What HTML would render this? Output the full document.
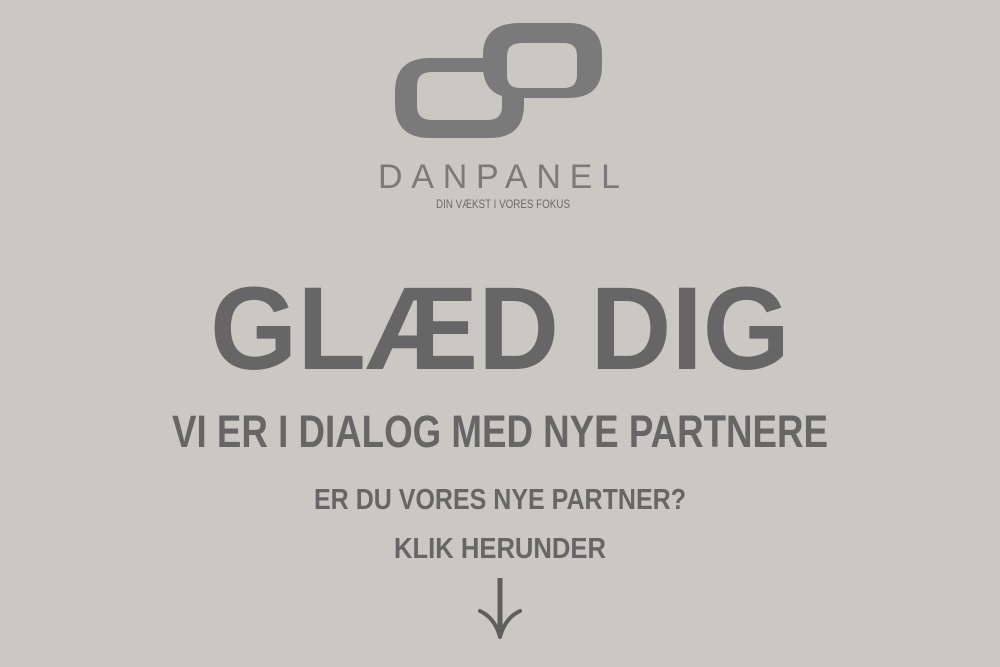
<!DOCTYPE html>
<html><head><meta charset="utf-8"><style>
html,body{margin:0;padding:0;width:1000px;height:667px;overflow:hidden;background:#cbc8c4;}
svg{display:block}
</style></head><body>
<svg width="1000" height="667" viewBox="0 0 1000 667" xmlns="http://www.w3.org/2000/svg">
<rect width="1000" height="667" fill="#cbc8c4"/>
<path fill="#7a7a7a" d="M430 58 H490 Q524 58 524 92 V104 Q524 138 490 138 H430 Q395 138 395 104 V92 Q395 58 430 58 Z"/>
<path fill="#cbc8c4" d="M432 72 H488 Q502 72 502 86 V106 Q502 120 488 120 H432 Q417 120 417 106 V86 Q417 72 432 72 Z"/>
<path fill="#7a7a7a" d="M520 23 H568 Q602 23 602 55 V66 Q602 98 568 98 H517 Q483 98 483 66 V55 Q483 23 520 23 Z"/>
<path fill="#cbc8c4" d="M522 43 H564 Q577 43 577 56 V75 Q577 88 564 88 H520 Q507 88 507 75 V56 Q507 43 522 43 Z"/>
<g font-family="Liberation Sans, sans-serif" text-anchor="middle">
<text x="499" y="188" font-size="34" fill="#7a7a7a" textLength="242" lengthAdjust="spacing">DANPANEL</text>
<text x="503" y="208" font-size="11.5" fill="#6a6a6a" textLength="134" lengthAdjust="spacingAndGlyphs">DIN VÆKST I VORES FOKUS</text>
<g font-weight="bold" fill="#666">
<text x="500" y="369" font-size="118" textLength="580" lengthAdjust="spacingAndGlyphs">GLÆD DIG</text>
<text x="500" y="447" font-size="45" textLength="656" lengthAdjust="spacingAndGlyphs">VI ER I DIALOG MED NYE PARTNERE</text>
<text x="500" y="509" font-size="29" textLength="372" lengthAdjust="spacingAndGlyphs">ER DU VORES NYE PARTNER?</text>
<text x="500" y="558" font-size="29" textLength="212" lengthAdjust="spacingAndGlyphs">KLIK HERUNDER</text>
</g>
</g>
<g stroke="#5e5e5e" fill="none">
<line x1="500" y1="578" x2="500" y2="632" stroke-width="5"/>
<path d="M480 611 Q495 618 500 637 Q505 618 520 611" stroke-width="4" stroke-linecap="round" stroke-linejoin="round"/>
</g>
</svg>
</body></html>
